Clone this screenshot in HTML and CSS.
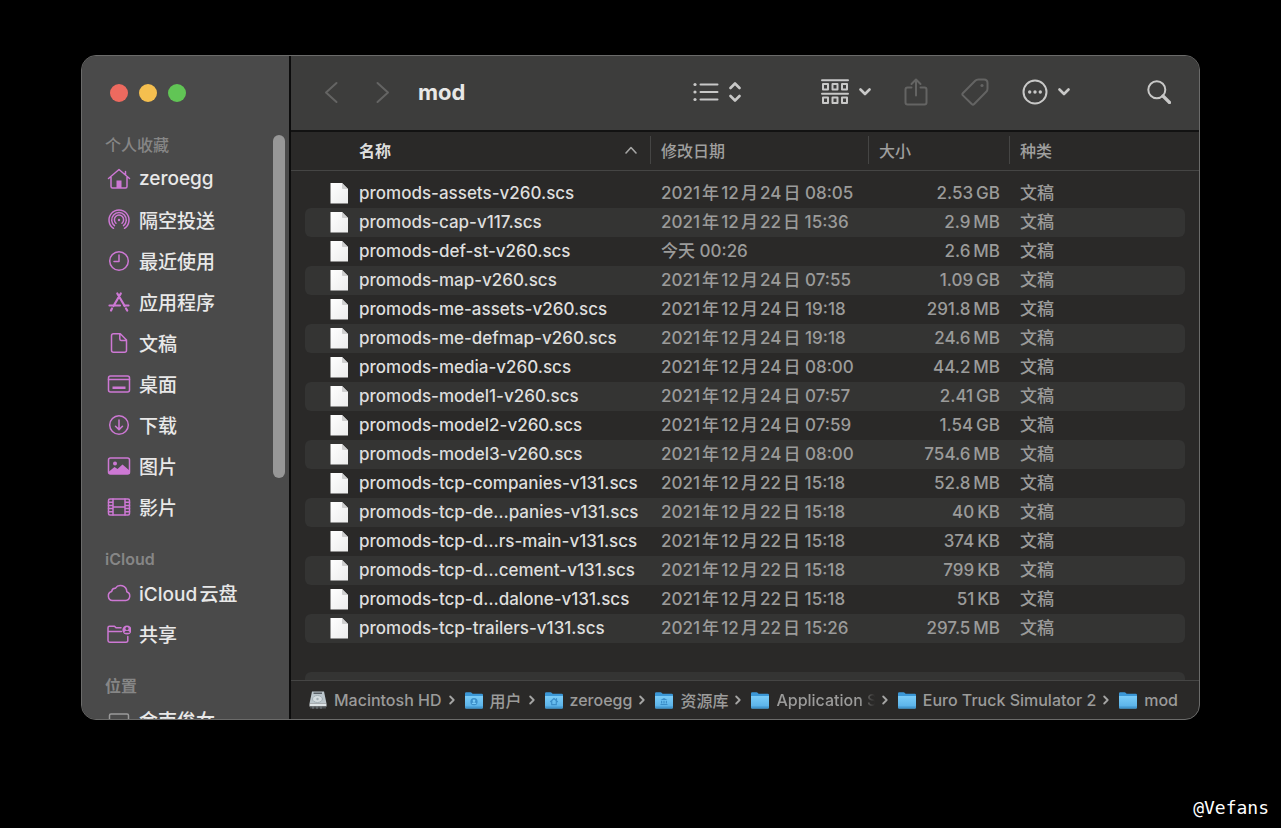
FILE: index.html
```html
<!DOCTYPE html>
<html lang="zh-CN">
<head>
    <meta charset="utf-8">
    <title>mod</title>
    <link rel="stylesheet" href="styles.css">
</head>
<body>

    <!-- shared icons -->
    <svg class="defs" width="0" height="0">
        <defs>
            <linearGradient id="blue" x1="0" y1="0" x2="0" y2="1">
                <stop offset="0" stop-color="#7accf8"/>
                <stop offset="1" stop-color="#55aee6"/>
            </linearGradient>
            <linearGradient id="paper" x1="0" y1="0" x2="1" y2="1">
                <stop offset="0" stop-color="#ffffff"/>
                <stop offset="1" stop-color="#ececec"/>
            </linearGradient>
            <symbol id="doc" viewBox="0 0 18 21">
                <path d="M0.5 0H12L18 6V20.5H0.5Z" fill="url(#paper)"/>
                <path d="M12 0V5.2Q12 6 12.800 6H18Z" fill="#cfcfcf"/>
            </symbol>
            <symbol id="folder" viewBox="0 0 18 17">
                <path d="M0 1.500Q0 0.300 1.200 0.300H5.500Q6.300 0.300 6.900 1L7.600 1.700H16.800Q18 1.700 18 2.900V8H0Z" fill="#3b97d6"/>
                <path d="M0 4H18V15.400Q18 16.500 16.900 16.500H1.100Q0 16.500 0 15.400Z" fill="url(#blue)"/>
                <path d="M0 14.500H18V15.400Q18 16.500 16.900 16.500H1.100Q0 16.500 0 15.400Z" fill="#4398d0"/>
            </symbol>
            <symbol id="down" viewBox="0 0 12 8">
                <path d="M1.500 1.500L6 6L10.500 1.500"/>
            </symbol>
            <symbol id="next" viewBox="0 0 6 10">
                <path d="M1.200 1.500L4.700 5L1.200 8.500"/>
            </symbol>
        </defs>
    </svg>

    <main class="window">
        <aside class="sidebar">
            <div class="lights">
                <button class="light red" aria-label="关闭"></button>
                <button class="light yellow" aria-label="最小化"></button>
                <button class="light green" aria-label="缩放"></button>
            </div>

            <nav class="places">
                <h2>个人收藏</h2>
                <ul>
                    <li><a href="#"><svg viewBox="0 0 24 24"><path d="M1.500 11.500L12 2.500L22.500 11.500M4 10V19.500Q4 21 5.500 21H18.500Q20 21 20 19.500V10M18.500 7.500V4.500"/><path class="solid" d="M9.500 21V13.500H14.500V21Z"/></svg>zeroegg</a></li>
                    <li><a href="#"><svg viewBox="0 0 24 24"><path d="M6.500 20.300A10 10 0 1 1 17.500 20.300M7.500 17.600A7.300 7.300 0 1 1 16.500 17.600M9 15.200A4.600 4.600 0 1 1 15 15.200"/><circle class="solid" cx="12" cy="12" r="1.200"/></svg>隔空投送</a></li>
                    <li><a href="#"><svg viewBox="0 0 24 24"><circle cx="12" cy="12" r="9.300"/><path d="M12 6V12.500H7"/></svg>最近使用</a></li>
                    <li><a href="#"><svg viewBox="0 0 24 24"><path class="thick" d="M10.300 3.500L17.700 16M19 18.500L20.200 20.500M13.800 3.500L6.500 16M5 18.500L4 20.500M2.500 15.500H13M17 15.500H21.500"/></svg>应用程序</a></li>
                    <li><a href="#"><svg viewBox="0 0 24 24"><path d="M13.300 2.800H6.500Q4.500 2.800 4.500 4.800V19.200Q4.500 21.200 6.500 21.200H17.500Q19.500 21.200 19.500 19.200V9ZM12.800 2.800V8Q12.800 9.500 14.300 9.500H19.500"/></svg>文稿</a></li>
                    <li><a href="#"><svg viewBox="0 0 24 24"><rect x="1.500" y="4" width="21" height="16" rx="2"/><path d="M1.500 7.500H22.500"/><path class="solid" d="M5.500 14.500H18.500V17H5.500Z"/></svg>桌面</a></li>
                    <li><a href="#"><svg viewBox="0 0 24 24"><circle cx="12" cy="12" r="9.300"/><path d="M12 7V16.500M8.500 13.200L12 16.600L15.500 13.200"/></svg>下载</a></li>
                    <li><a href="#"><svg viewBox="0 0 24 24"><rect x="1.500" y="4" width="21" height="16" rx="2"/><circle class="solid" cx="8" cy="9.500" r="2"/><path class="solid" d="M2 17.500L7.500 13L10.500 15L15.500 10.500L22.500 16.500V20H2Z"/></svg>图片</a></li>
                    <li><a href="#"><svg viewBox="0 0 24 24"><rect x="1.500" y="4" width="21" height="16" rx="1.500"/><path d="M6 4V20M18 4V20M6 12H18M1.500 7.200H6M1.500 10.400H6M1.500 13.600H6M1.500 16.800H6M18 7.200H22.500M18 10.400H22.500M18 13.600H22.500M18 16.800H22.500"/></svg>影片</a></li>
                </ul>
                <h2>iCloud</h2>
                <ul>
                    <li><a href="#"><svg viewBox="0 0 24 24"><path d="M5.500 19.500A4.600 4.600 0 0 1 4.700 10.500A3.500 3.500 0 0 1 8.300 7.300A6.300 6.300 0 0 1 19.800 10.800A4.500 4.500 0 0 1 18.700 19.500Z"/></svg>iCloud云盘</a></li>
                    <li><a href="#"><svg viewBox="0 0 24 24"><path d="M14 5.800H9L7.500 4.200H2.500Q1 4.200 1 5.700V18.500Q1 20.200 2.700 20.200H19Q20.800 20.200 20.800 18.500V14.500M1 9.500H14.500"/><circle class="solid" cx="20" cy="8" r="4.600"/><circle class="hole" cx="20" cy="6.500" r="1.500"/><path class="hole" d="M17.300 10.700Q17.500 8.700 20 8.700Q22.500 8.700 22.700 10.700Z"/></svg>共享</a></li>
                </ul>
                <h2>位置</h2>
                <ul>
                    <li class="device"><a href="#"><svg viewBox="0 0 24 24"><path d="M2.500 18V7.500Q2.500 6 4 6H20Q21.500 6 21.500 7.500V18M0.500 19H23.500"/></svg>金南俊女</a></li>
                </ul>
            </nav>
            <div class="thumb"></div>
        </aside>

        <section class="content">
            <header class="toolbar">
                <button class="dim" aria-label="后退"><svg width="14" height="24" viewBox="0 0 14 24"><path d="M12.500 3L2 12.500L12.500 22"/></svg></button>
                <button class="dim forward" aria-label="前进"><svg width="14" height="24" viewBox="0 0 14 24"><path d="M1.500 3L12 12.500L1.500 22"/></svg></button>
                <h1>mod</h1>

                <button class="view" aria-label="显示">
                    <svg width="26" height="20" viewBox="0 0 26 20"><path d="M7.500 2.500H24.500M7.500 10H24.500M7.500 17.500H24.500"/><g class="fill"><circle cx="2" cy="2.500" r="1.600"/><circle cx="2" cy="10" r="1.600"/><circle cx="2" cy="17.500" r="1.600"/></g></svg>
                    <svg class="bold" width="12" height="20" viewBox="0 0 12 20"><path d="M1.500 6L6 1.500L10.500 6M1.500 14L6 18.500L10.500 14"/></svg>
                </button>
                <button class="group" aria-label="群组">
                    <svg width="28" height="26" viewBox="0 0 28 26"><path d="M1 1.200H27M1 14.700H27M2 5H7V10.500H2ZM11.500 5H16.500V10.500H11.500ZM21 5H26V10.500H21ZM2 18.500H7V24H2ZM11.500 18.500H16.500V24H11.500ZM21 18.500H26V24H21Z"/></svg>
                    <svg class="bold" width="12" height="8"><use href="#down"/></svg>
                </button>
                <button class="dim tool" aria-label="共享"><svg width="24" height="28" viewBox="0 0 24 28"><path d="M7.500 9.500H3.500Q1.500 9.500 1.500 11.500V24.500Q1.500 26.500 3.500 26.500H20.500Q22.500 26.500 22.500 24.500V11.500Q22.500 9.500 20.500 9.500H16.500M12 17.500V1.500M7.500 6L12 1.500L16.500 6"/></svg></button>
                <button class="dim tool" aria-label="标签"><svg width="28" height="28" viewBox="0 0 28 28"><path d="M1.800 15.300L14.200 2.800Q15.500 1.500 17.300 1.500H23Q26.500 1.500 26.500 5V10.700Q26.500 12.500 25.200 13.800L13.200 26Q12 27.200 10.700 26L1.900 17.400Q0.800 16.300 1.800 15.300Z"/><circle class="fill" cx="21" cy="7.500" r="1.600"/></svg></button>
                <button class="tool" aria-label="操作">
                    <svg width="26" height="26" viewBox="0 0 26 26"><circle cx="13" cy="13" r="11.500"/><g class="fill"><circle cx="7.700" cy="13" r="1.700"/><circle cx="13" cy="13" r="1.700"/><circle cx="18.300" cy="13" r="1.700"/></g></svg>
                    <svg class="bold" width="12" height="8"><use href="#down"/></svg>
                </button>
                <button class="search" aria-label="搜索"><svg width="24" height="24" viewBox="0 0 24 24"><circle cx="9.800" cy="9.800" r="8.500"/><path class="handle" d="M16 16L22.500 22.500"/></svg></button>
            </header>

            <div class="list">
                <table>
                    <colgroup>
                        <col>
                        <col class="col-date">
                        <col class="col-size">
                        <col class="col-kind">
                    </colgroup>
                    <thead>
                        <tr>
                            <th class="sorted"><span>名称<svg width="12" height="8" viewBox="0 0 12 8"><path d="M1 7L6 1.500L11 7"/></svg></span></th>
                            <th><span>修改日期</span></th>
                            <th><span>大小</span></th>
                            <th><span>种类</span></th>
                        </tr>
                    </thead>
                    <tbody id="files"></tbody>
                </table>
            </div>

            <footer class="path">
                <a href="#"><svg width="18" height="18" viewBox="0 0 18 18"><path d="M3 0.500H15L17.500 12.500H0.500Z" fill="#bcc6cc"/><path d="M4.500 1.500H13V3H4.500Z" fill="#596066"/><ellipse cx="8.500" cy="8" rx="5" ry="3.500" fill="#d5dde1" stroke="#a3afb5"/><circle cx="8.500" cy="8" r="1.200" fill="#a3afb5"/><path d="M0.500 12.500H17.500V15.500H0.500Z" fill="#dfe5e8"/><path d="M1 15.500H17V17.500H1Z" fill="#4a4f52"/><path d="M4 15.500V17.500M8 15.500V17.500M12 15.500V17.500" stroke="#7d8488"/></svg><span>Macintosh HD</span></a>
                <svg class="sep" width="6" height="10"><use href="#next"/></svg>
                <a href="#"><svg width="18" height="17" viewBox="0 0 18 17"><use href="#folder"/><circle cx="9" cy="9.700" r="3.600" fill="#3c8fc9"/><circle cx="9" cy="8.700" r="1.300" fill="#7accf8"/><path d="M6.700 12Q7 10.300 9 10.300Q11 10.300 11.300 12Z" fill="#7accf8"/></svg><span>用户</span></a>
                <svg class="sep" width="6" height="10"><use href="#next"/></svg>
                <a href="#"><svg width="18" height="17" viewBox="0 0 18 17"><use href="#folder"/><path d="M5.500 9.700L9 6.500L12.500 9.700M6.700 9V12.700H11.300V9M11.500 8.500V6.700" fill="none" stroke="#3c8fc9" stroke-width="1.200"/></svg><span>zeroegg</span></a>
                <svg class="sep" width="6" height="10"><use href="#next"/></svg>
                <a href="#"><svg width="18" height="17" viewBox="0 0 18 17"><use href="#folder"/><path d="M5.500 8L9 6L12.500 8ZM5.500 12H12.500V13H5.500ZM6 8.700H7.200V11.500H6ZM8.400 8.700H9.600V11.500H8.400ZM10.800 8.700H12V11.500H10.800Z" fill="#3c8fc9"/></svg><span>资源库</span></a>
                <svg class="sep" width="6" height="10"><use href="#next"/></svg>
                <a class="cut" href="#"><svg width="18" height="17"><use href="#folder"/></svg><span>Application Support</span></a>
                <svg class="sep" width="6" height="10"><use href="#next"/></svg>
                <a href="#"><svg width="18" height="17"><use href="#folder"/></svg><span>Euro Truck Simulator 2</span></a>
                <svg class="sep" width="6" height="10"><use href="#next"/></svg>
                <a href="#"><svg width="18" height="17"><use href="#folder"/></svg><span>mod</span></a>
            </footer>
        </section>
    </main>

    <div class="mark">@Vefans</div>

    <script src="files.js"></script>
</body>
</html>
```
FILE: styles.css
```css
* {
    box-sizing: border-box;
}

body {
    margin: 0;
    height: 100vh;
    padding: 55px 81px 0;
    display: flex;
    flex-direction: column;
    background: #000;
    font-family: Inter, "Noto Sans CJK SC", sans-serif;
    font-size: 17px;
    font-weight: 500;
    text-autospace: normal;
    overflow: hidden;
}

.defs {
    position: absolute;
}

svg {
    display: block;
    flex: none;
    fill: none;
    stroke-linecap: round;
    stroke-linejoin: round;
}

a {
    color: inherit;
    text-decoration: none;
}

button {
    display: flex;
    align-items: center;
    gap: 10px;
    padding: 0;
    border: 0;
    background: none;
    color: #c8c8c7;
}

.window {
    flex: 1;
    min-height: 0;
    display: flex;
    border: 1px solid #6b6b6a;
    border-radius: 15px;
    overflow: hidden;
    background: #2a2928;
}

/* sidebar */
.sidebar {
    position: relative;
    width: 209px;
    flex: none;
    border-right: 2px solid #0c0c0c;
    background: #4a4a4a;
    overflow: hidden;
}

.lights {
    display: flex;
    gap: 11px;
    padding: 28px 28px 0;
    height: 76px;
}

.light {
    width: 18px;
    height: 18px;
    border-radius: 50%;
}

.red {
    background: #ed6a5f;
}

.yellow {
    background: #f5bf4f;
}

.green {
    background: #61c555;
}

.places h2 {
    margin: 19px 0 0;
    padding-left: 23px;
    font-size: 16px;
    font-weight: 600;
    line-height: 26px;
    color: #868686;
}

.places h2:first-child {
    margin-top: 0;
    font-weight: 500;
}

.places ul {
    margin: 0;
    padding: 0;
    list-style: none;
}

.places a {
    display: flex;
    align-items: center;
    gap: 8px;
    height: 41px;
    padding-left: 25px;
    font-size: 19px;
    color: #e8e8e8;
}

.places svg {
    width: 24px;
    height: 24px;
    stroke: #cd78d4;
    stroke-width: 1.5;
}

.places .solid {
    fill: #cd78d4;
    stroke: none;
}

.places .hole {
    fill: #4a4a4a;
    stroke: none;
}

.places .thick {
    stroke-width: 2.2;
}

.places .device svg {
    stroke: #9a9a9a;
}

.thumb {
    position: absolute;
    top: 79px;
    right: 4px;
    width: 12px;
    height: 343px;
    border-radius: 6px;
    background: #979797;
}

/* right side */
.content {
    flex: 1;
    min-width: 0;
    display: flex;
    flex-direction: column;
}

.toolbar {
    display: flex;
    align-items: center;
    flex: none;
    height: 76px;
    padding: 0 28px 2px 33px;
    border-bottom: 2px solid #121212;
    background: #3d3d3c;
}

.toolbar svg {
    stroke: currentColor;
    stroke-width: 2;
}

.toolbar .bold {
    stroke-width: 2.6;
}

.toolbar .fill {
    fill: currentColor;
    stroke: none;
}

.toolbar .handle {
    stroke-width: 3.2;
}

.toolbar .dim {
    color: #646463;
}

.forward {
    margin-left: 38px;
}

.toolbar h1 {
    margin: 0 0 0 28px;
    font-size: 22px;
    font-weight: 700;
    color: #e8e8e7;
}

.view {
    margin-left: auto;
}

.group {
    margin-left: 80px;
}

.tool {
    margin-left: 33px;
}

.search {
    margin-left: 77px;
}

/* file list */
.list {
    flex: 1;
    min-height: 0;
    overflow: hidden;
}

table {
    width: 100%;
    table-layout: fixed;
    border-collapse: separate;
    border-spacing: 0;
}

.col-date {
    width: 218px;
}

.col-size {
    width: 141px;
}

.col-kind {
    width: 190px;
}

th {
    height: 39px;
    padding: 0 0 2px;
    border-bottom: 1px solid #454544;
    font-size: 16px;
    font-weight: 500;
    text-align: left;
    color: #9f9f9e;
}

th span {
    display: flex;
    align-items: center;
    justify-content: space-between;
    height: 28px;
    padding-left: 10px;
    border-left: 1px solid #454544;
}

th svg {
    stroke: #a5a5a4;
    stroke-width: 1.6;
}

.sorted {
    font-weight: 700;
    color: #dededd;
}

.sorted span {
    padding: 0 13px 0 68px;
    border-left: 0;
}

tbody::before {
    content: "";
    display: block;
    height: 8px;
}

td {
    height: 29px;
    padding: 0 0 0 11px;
    line-height: 29px;
    white-space: nowrap;
    color: #9b9b9a;
    background-clip: padding-box;
}

td:first-child {
    padding-left: 25px;
    border-left: 14px solid transparent;
    border-radius: 20px 0 0 20px / 6px 0 0 6px;
    color: #dededd;
}

td:last-child {
    border-right: 14px solid transparent;
    border-radius: 0 20px 20px 0 / 0 6px 6px 0;
}

tbody tr:nth-child(even) td {
    background-color: #343433;
}

.name {
    display: flex;
    align-items: center;
    gap: 11px;
}

.size {
    padding-right: 9px;
    text-align: right;
}

/* path bar */
.path {
    display: flex;
    align-items: center;
    flex: none;
    height: 39px;
    padding: 0 21px 0 18px;
    border-top: 1px solid #454544;
    font-size: 16px;
    white-space: nowrap;
    color: #9b9b9a;
}

.path a {
    display: flex;
    align-items: center;
    flex: none;
    gap: 7px;
}

.path .cut {
    flex: 0 1 auto;
    min-width: 0;
}

.cut span {
    overflow: hidden;
    mask-image: linear-gradient(to left, transparent, #000 16px);
}

.sep {
    margin: 0 10px 0 7px;
    stroke: #a5a5a4;
    stroke-width: 1.8;
}

.mark {
    flex: none;
    height: 108px;
    padding: 76px 0 0;
    margin-right: -69px;
    font-family: "DejaVu Sans Mono", monospace;
    font-size: 18px;
    line-height: 24px;
    text-align: right;
    color: #fff;
}
```
FILE: files.js
```js
const files = [
    ["promods-assets-v260.scs", "2021年12月24日 08:05", "2.53 GB"],
    ["promods-cap-v117.scs", "2021年12月22日 15:36", "2.9 MB"],
    ["promods-def-st-v260.scs", "今天 00:26", "2.6 MB"],
    ["promods-map-v260.scs", "2021年12月24日 07:55", "1.09 GB"],
    ["promods-me-assets-v260.scs", "2021年12月24日 19:18", "291.8 MB"],
    ["promods-me-defmap-v260.scs", "2021年12月24日 19:18", "24.6 MB"],
    ["promods-media-v260.scs", "2021年12月24日 08:00", "44.2 MB"],
    ["promods-model1-v260.scs", "2021年12月24日 07:57", "2.41 GB"],
    ["promods-model2-v260.scs", "2021年12月24日 07:59", "1.54 GB"],
    ["promods-model3-v260.scs", "2021年12月24日 08:00", "754.6 MB"],
    ["promods-tcp-companies-v131.scs", "2021年12月22日 15:18", "52.8 MB"],
    ["promods-tcp-de…panies-v131.scs", "2021年12月22日 15:18", "40 KB"],
    ["promods-tcp-d…rs-main-v131.scs", "2021年12月22日 15:18", "374 KB"],
    ["promods-tcp-d…cement-v131.scs", "2021年12月22日 15:18", "799 KB"],
    ["promods-tcp-d…dalone-v131.scs", "2021年12月22日 15:18", "51 KB"],
    ["promods-tcp-trailers-v131.scs", "2021年12月22日 15:26", "297.5 MB"]
];

let rows = "";
for (let i = 0; i < files.length; i++) {
    let [name, date, size] = files[i];
    rows += `<tr>
        <td><div class="name"><svg width="18" height="21"><use href="#doc"/></svg>${name}</div></td>
        <td>${date}</td>
        <td class="size">${size.replace(" ", "\u2009")}</td>
        <td>文稿</td>
    </tr>`;
}

// empty rows keep the stripes going below the last file
for (let i = 0; i < 2; i++) {
    rows += "<tr><td></td><td></td><td></td><td></td></tr>";
}
document.getElementById("files").innerHTML = rows;
```
